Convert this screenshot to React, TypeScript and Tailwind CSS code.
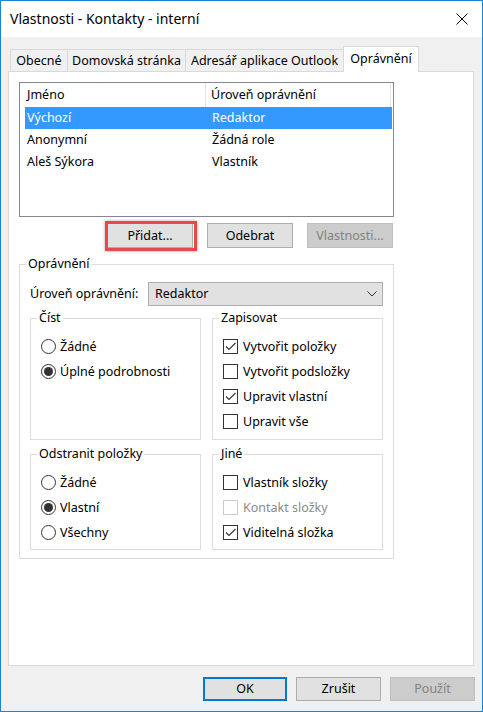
import React from "react";

function Radio({ checked, label }: { checked?: boolean; label: string }) {
  return (
    <div className="flex h-[25px] items-center">
      <span className="flex h-[15px] w-[15px] items-center justify-center rounded-full border border-[#333333] bg-white">
        {checked && <span className="h-[9px] w-[9px] rounded-full bg-[#333333]" />}
      </span>
      <span className="ml-[4px]">{label}</span>
    </div>
  );
}

function Check({ checked, disabled, label }: { checked?: boolean; disabled?: boolean; label: string }) {
  return (
    <div className="flex h-[25px] items-center">
      <span
        className={`flex h-[15px] w-[15px] items-center justify-center border bg-white ${
          disabled ? "border-[#cccccc]" : "border-[#333333]"
        }`}
      >
        {checked && (
          <svg width="13" height="13" viewBox="0 0 13 13">
            <path d="M2 6.5 L5 9.5 L11.5 3" stroke="#333333" strokeWidth="1.1" fill="none" />
          </svg>
        )}
      </span>
      <span className={`ml-[5px] ${disabled ? "text-[#8a8a8a]" : ""}`}>{label}</span>
    </div>
  );
}

function Group({ title, className, children }: { title: string; className?: string; children: React.ReactNode }) {
  return (
    <fieldset className={`min-w-0 border border-[#dcdcdc] ${className ?? ""}`}>
      <legend className="ml-[6px] px-[2px] leading-[16px]">{title}</legend>
      {children}
    </fieldset>
  );
}

function Btn({
  children,
  disabled,
  primary,
  className,
}: {
  children: React.ReactNode;
  disabled?: boolean;
  primary?: boolean;
  className?: string;
}) {
  return (
    <div
      className={`relative flex items-center justify-center ${
        disabled
          ? "border border-[#bfbfbf] bg-[#cccccc] text-[#838383]"
          : primary
          ? "border-2 border-[#0078d7] bg-[#e1e1e1]"
          : "border border-[#adadad] bg-[#e1e1e1]"
      } ${className ?? ""}`}
    >
      {children}
    </div>
  );
}

const rows = [
  { name: "Výchozí", level: "Redaktor", selected: true },
  { name: "Anonymní", level: "Žádná role" },
  { name: "Aleš Sýkora", level: "Vlastník" },
];

export default function App() {
  return (
    <div className="flex h-[712px] w-[483px] flex-col border border-[#1883d7] bg-[#f0f0f0] font-['Noto_Sans',sans-serif] text-[12.5px] leading-[16px] text-black">
      {/* title bar */}
      <div className="flex h-[36px] shrink-0 items-center justify-between bg-white pl-[9px] pr-[14px]">
        <span className="text-[14px] leading-[20px]">Vlastnosti - Kontakty - interní</span>
        <svg width="12" height="12" viewBox="0 0 12 12">
          <path d="M0.5 0.5 L11.5 11.5 M11.5 0.5 L0.5 11.5" stroke="#000" strokeWidth="1" />
        </svg>
      </div>

      <div className="flex flex-1 flex-col px-[7px] pt-[9px]">
        {/* tabs */}
        <div className="flex h-[25px] items-end pl-[2px]">
          <div className="flex h-[22px] w-[58px] items-center justify-center border border-b-0 border-[#d9d9d9]">Obecné</div>
          <div className="-ml-px flex h-[22px] w-[119px] items-center justify-center border border-b-0 border-[#d9d9d9]">
            Domovská stránka
          </div>
          <div className="-ml-px flex h-[22px] w-[159px] items-center justify-center border border-b-0 border-[#d9d9d9]">
            Adresář aplikace Outlook
          </div>
          <div className="relative z-10 -mb-px -ml-px flex h-[26px] w-[76px] items-center justify-center border border-b-0 border-[#d9d9d9] bg-white pb-[2px]">
            Oprávnění
          </div>
        </div>

        {/* tab panel */}
        <div className="flex h-[595px] w-[466px] flex-col border border-[#d9d9d9] bg-white pl-[10px] pt-[10px]">
          {/* list */}
          <div className="h-[135px] w-[375px] border border-[#828790] bg-white">
            <div className="flex h-[24px] items-center">
              <div className="flex h-full w-[186px] items-center border-r border-[#e5e5e5] pl-[7px]">Jméno</div>
              <div className="flex h-full w-[185px] items-center border-r border-[#e5e5e5] pl-[5px]">Úroveň oprávnění</div>
            </div>
            {rows.map((r) => (
              <div
                key={r.name}
                className={`ml-[5px] flex h-[22px] w-[367px] items-center ${r.selected ? "bg-[#3399ff] text-white" : ""}`}
              >
                <div className="w-[185px] pl-[2px]">{r.name}</div>
                <div className="pl-[2px]">{r.level}</div>
              </div>
            ))}
          </div>

          {/* list buttons */}
          <div className="mt-[6px] flex w-[375px] justify-end gap-[14px] pr-[1px]">
            <Btn className="h-[25px] w-[86px]">
              Přidat...
              <span className="absolute -bottom-[4px] -left-[3px] -right-[5px] -top-[3px] border-[3px] border-[#e84848] shadow-[0_0_3px_rgba(0,0,0,0.35)]" />
            </Btn>
            <Btn className="h-[25px] w-[86px]">Odebrat</Btn>
            <Btn disabled className="h-[25px] w-[86px]">
              Vlastnosti...
            </Btn>
          </div>

          {/* permissions group */}
          <Group title="Oprávnění" className="mt-[8px] w-[375px]">
            <div className="pb-[8px] pl-[10px] pr-[10px] pt-[10px]">
              <div className="flex h-[24px] items-center">
                <span className="w-[118px]">Úroveň oprávnění:</span>
                <div className="flex h-[24px] w-[235px] items-center justify-between border border-[#adadad] bg-[#e1e1e1] pl-[6px] pr-[5px]">
                  <span>Redaktor</span>
                  <svg width="10" height="6" viewBox="0 0 10 6">
                    <path d="M0.5 0.5 L5 5 L9.5 0.5" stroke="#333333" strokeWidth="1" fill="none" />
                  </svg>
                </div>
              </div>

              <div className="mt-[4px] grid w-[353px] grid-cols-2 gap-x-[11px]">
                <Group title="Číst">
                  <div className="pb-[5px] pl-[10px] pt-[8px]">
                    <Radio label="Žádné" />
                    <Radio checked label="Úplné podrobnosti" />
                  </div>
                </Group>
                <Group title="Zapisovat">
                  <div className="pb-[5px] pl-[10px] pt-[8px]">
                    <Check checked label="Vytvořit položky" />
                    <Check label="Vytvořit podsložky" />
                    <Check checked label="Upravit vlastní" />
                    <Check label="Upravit vše" />
                  </div>
                </Group>
              </div>

              <div className="mt-[6px] grid w-[353px] grid-cols-2 gap-x-[11px]">
                <Group title="Odstranit položky">
                  <div className="pb-[4px] pl-[10px] pt-[8px]">
                    <Radio label="Žádné" />
                    <Radio checked label="Vlastní" />
                    <Radio label="Všechny" />
                  </div>
                </Group>
                <Group title="Jiné">
                  <div className="pb-[4px] pl-[10px] pt-[8px]">
                    <Check label="Vlastník složky" />
                    <Check disabled label="Kontakt složky" />
                    <Check checked label="Viditelná složka" />
                  </div>
                </Group>
              </div>
            </div>
          </Group>
        </div>

        {/* dialog buttons */}
        <div className="mt-[11px] flex justify-end gap-[9px]">
          <Btn primary className="h-[24px] w-[84px]">
            OK
          </Btn>
          <Btn className="h-[24px] w-[85px]">Zrušit</Btn>
          <Btn disabled className="h-[24px] w-[85px]">
            Použít
          </Btn>
        </div>
      </div>
    </div>
  );
}
